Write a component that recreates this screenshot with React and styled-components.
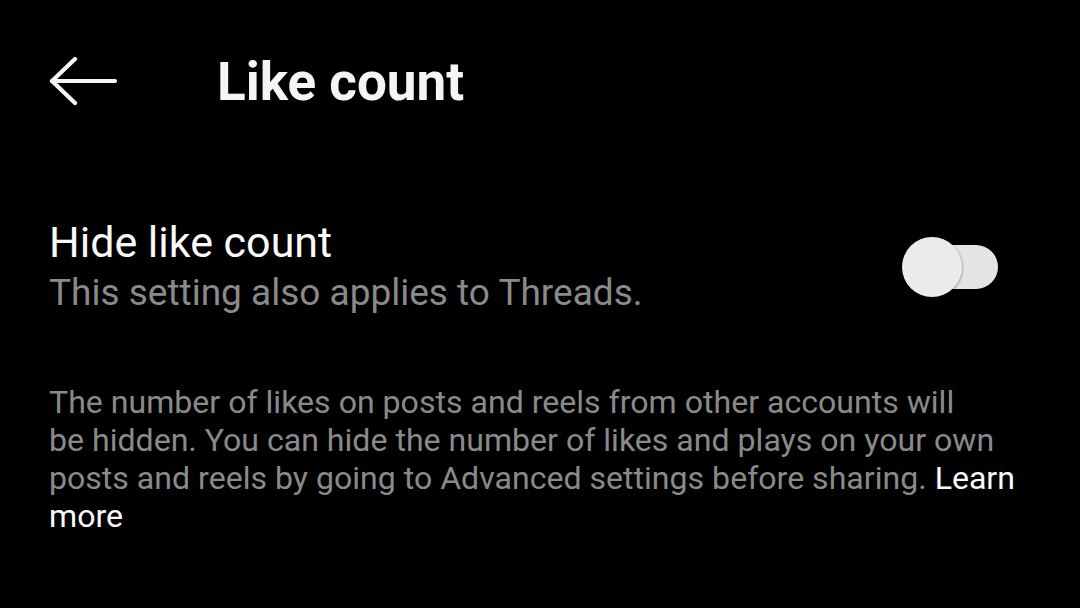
import React, { useState } from 'react';
import styled, { createGlobalStyle } from 'styled-components';

const GlobalStyle = createGlobalStyle`
  html, body {
    margin: 0;
    padding: 0;
    background: #000;
  }
  body {
    font-family: Roboto, "Liberation Sans", sans-serif;
    -webkit-font-smoothing: antialiased;
  }
`;

const Screen = styled.div`
  width: 1080px;
  height: 608px;
  background: #000;
  color: #f5f5f5;
  overflow: hidden;
`;

const Header = styled.header`
  display: flex;
  align-items: center;
  height: 164px;
  padding: 0 0 0 49px;
  box-sizing: border-box;
`;

const BackButton = styled.button`
  display: flex;
  align-items: center;
  justify-content: center;
  width: 70px;
  height: 50px;
  padding: 0;
  margin: 0 98px 0 0;
  background: none;
  border: 0;
  color: #f5f5f5;
  cursor: pointer;
`;

const Title = styled.h1`
  margin: 0;
  font-size: 53px;
  font-weight: 700;
  line-height: 1;
  color: #f5f5f5;
`;

const SettingRow = styled.div`
  display: flex;
  align-items: center;
  justify-content: space-between;
  margin-top: 52px;
  padding: 0 82px 0 49px;
`;

const Labels = styled.div`
  display: flex;
  flex-direction: column;
`;

const Label = styled.div`
  font-size: 43px;
  line-height: 52px;
  color: #fafafa;
`;

const Sub = styled.div`
  font-size: 37px;
  line-height: 50px;
  color: #8a8a8a;
`;

const Track = styled.div`
  position: relative;
  width: 78px;
  height: 44px;
  border-radius: 22px;
  background: ${p => (p.on ? '#0095f6' : '#e4e4e4')};
  cursor: pointer;
`;

const Knob = styled.div`
  position: absolute;
  top: -8px;
  left: ${p => (p.on ? '48px' : '-18px')};
  width: 60px;
  height: 60px;
  border-radius: 50%;
  background: #ebebeb;
  box-shadow: 1px 1px 2px rgba(0, 0, 0, 0.25);
`;

const Note = styled.p`
  margin: 65px 0 0 49px;
  width: 990px;
  font-size: 32.1px;
  line-height: 38px;
  color: #8a8a8a;
`;

const Link = styled.a`
  color: #fafafa;
  text-decoration: none;
`;

function Toggle() {
  const [on, setOn] = useState(false);
  return (
    <Track on={on ? 1 : 0} onClick={() => setOn(!on)}>
      <Knob on={on ? 1 : 0} />
    </Track>
  );
}

export default function App() {
  return (
    <Screen>
      <GlobalStyle />
      <Header>
        <BackButton aria-label="Back">
          <svg width="70" height="50" viewBox="0 0 70 50" fill="none" stroke="currentColor" strokeWidth="4.2" strokeLinecap="round" strokeLinejoin="round">
            <path d="M3 24 H66" />
            <path d="M26 2 L3 24 L26 46" />
          </svg>
        </BackButton>
        <Title>Like count</Title>
      </Header>
      <SettingRow>
        <Labels>
          <Label>Hide like count</Label>
          <Sub>This setting also applies to Threads.</Sub>
        </Labels>
        <Toggle />
      </SettingRow>
      <Note>
        The number of likes on posts and reels from other accounts will<br />
        be hidden. You can hide the number of likes and plays on your own<br />
        posts and reels by going to Advanced settings before sharing. <Link href="#">Learn</Link><br />
        <Link href="#">more</Link>
      </Note>
    </Screen>
  );
}
